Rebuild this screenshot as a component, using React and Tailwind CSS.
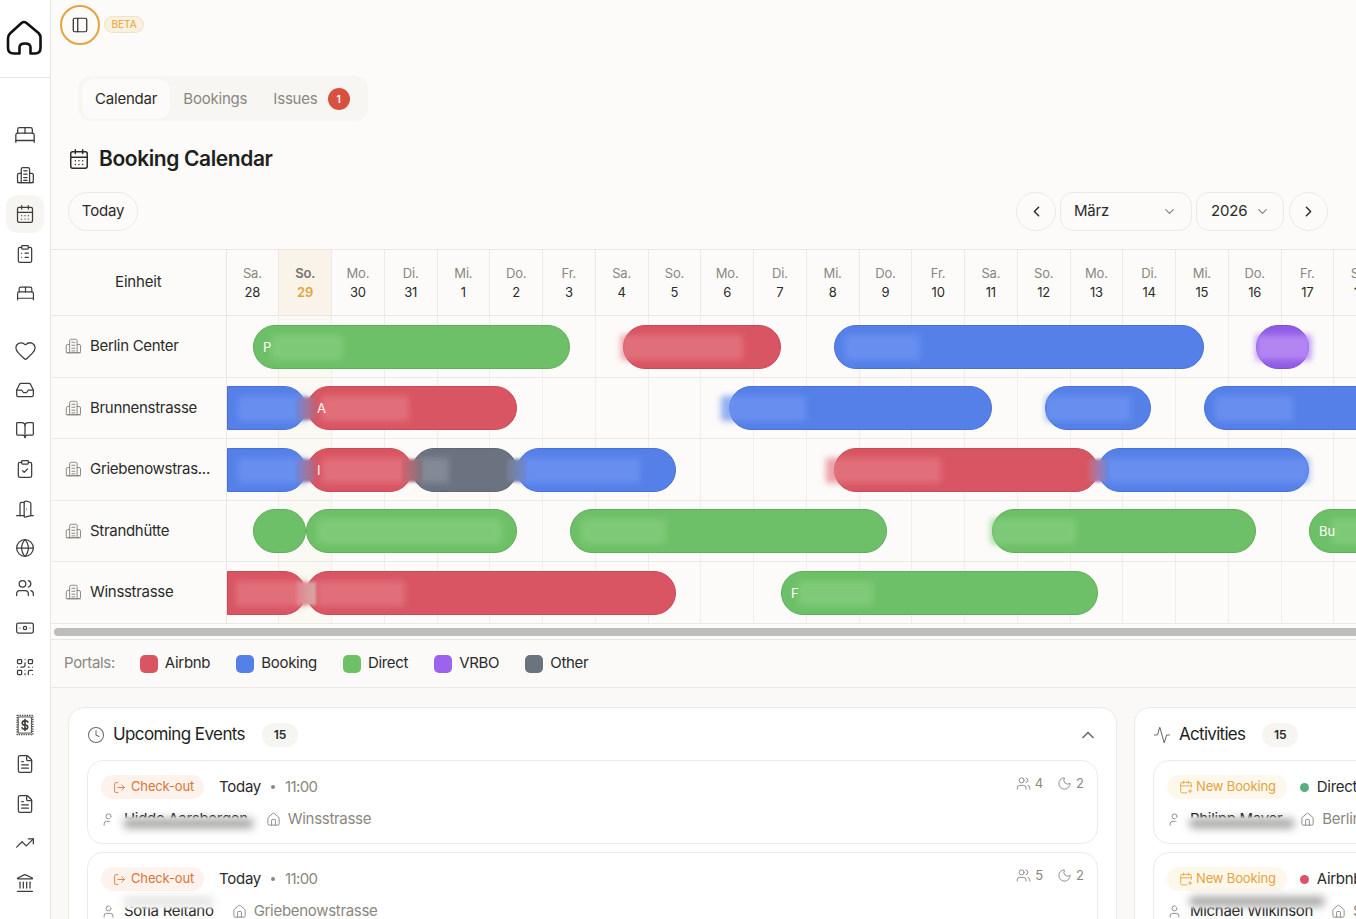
import React from "react";
import {
  BedDouble, CalendarDays, ClipboardList, Heart, Inbox, BookOpen, ClipboardCheck, DoorOpen, Globe, Users, Banknote, QrCode,
  FileText, TrendingUp, Landmark, PanelLeft, ChevronLeft, ChevronRight, ChevronDown, ChevronUp, Clock, Activity, LogOut, User, House, Moon, CalendarPlus,
} from "lucide-react";

const B = { c: "bg-[#5580e8] border-[#4a72d6]", tint: "bg-[#6f94f2]/75" };
const R = { c: "bg-[#d95563] border-[#c94a58]", tint: "bg-[#e47a85]/70" };
const G = { c: "bg-[#6dc067] border-[#5fae5a]", tint: "bg-[#84cc7e]/75" };
const P = { c: "bg-[#8f5ce6] border-[#7f4fd6]", tint: "bg-[#b488f2]/95" };
const O = { c: "bg-[#6b7280] border-[#5f6673]", tint: "bg-[#8b919c]/75" };

const BR = "bg-linear-to-r from-[#6a84dc] to-[#c0606e]";
const RO = "bg-linear-to-r from-[#d0606e] to-[#7c7480]";
const OB = "bg-linear-to-r from-[#767c8a] to-[#6a88dc]";
const RB = "bg-linear-to-r from-[#d0606e] to-[#6a84dc]";
const RR = "bg-linear-to-r from-[#e0808a] to-[#d8a8a8]";

const days = [
  ["Sa.", "28"], ["So.", "29"], ["Mo.", "30"], ["Di.", "31"], ["Mi.", "1"], ["Do.", "2"], ["Fr.", "3"], ["Sa.", "4"], ["So.", "5"], ["Mo.", "6"], ["Di.", "7"],
  ["Mi.", "8"], ["Do.", "9"], ["Fr.", "10"], ["Sa.", "11"], ["So.", "12"], ["Mo.", "13"], ["Di.", "14"], ["Mi.", "15"], ["Do.", "16"], ["Fr.", "17"], ["Sa.", "18"],
];

const rows = [
  { name: "Berlin Center", bars: [
    { l: 26, w: 317, k: G, t: "P", blur: [17, 72] },
    { l: 396, w: 158, k: R, blur: [-3, 122] },
    { l: 607, w: 370, k: B, blur: [10, 75] },
    { l: 1029, w: 53, k: P, blur: [-1, 55] },
  ]},
  { name: "Brunnenstrasse", bars: [
    { l: 0, w: 79, k: B, flat: true, blur: [10, 68], edge: BR },
    { l: 80, w: 210, k: R, t: "A", blur: [13, 88] },
    { l: 502, w: 263, k: B, blur: [-9, 85] },
    { l: 818, w: 106, k: B, blur: [0, 85] },
    { l: 977, w: 200, k: B, blur: [10, 78] },
  ]},
  { name: "Griebenowstras...", bars: [
    { l: 0, w: 79, k: B, flat: true, blur: [10, 68], edge: BR },
    { l: 80, w: 105, k: R, t: "I", blur: [14, 85], edge: RO },
    { l: 185, w: 105, k: O, blur: [6, 30], edge: OB },
    { l: 290, w: 159, k: B, blur: [4, 118] },
    { l: 607, w: 264, k: R, blur: [-9, 115], edge: RB },
    { l: 871, w: 211, k: B, blur: [8, 202] },
  ]},
  { name: "Strandhütte", bars: [
    { l: 26, w: 53, k: G },
    { l: 79, w: 211, k: G, blur: [10, 185] },
    { l: 343, w: 317, k: G, blur: [10, 85] },
    { l: 765, w: 264, k: G, blur: [-2, 85] },
    { l: 1082, w: 100, k: G, t: "Bu", blur: [21, 70] },
  ]},
  { name: "Winsstrasse", bars: [
    { l: 0, w: 79, k: R, flat: true, blur: [8, 70], edge: RR },
    { l: 79, w: 370, k: R, blur: [10, 88] },
    { l: 554, w: 317, k: G, t: "F", blur: [16, 75] },
  ]},
];

function SideIcon({ I, active, size = 20, sw = 1.5 }) {
  return (
    <div className={`w-[38px] h-[38px] mb-[1.55px] rounded-xl flex items-center justify-center ${active ? "bg-[#f6f5f2]" : ""}`}>
      <I size={size} strokeWidth={sw} className="text-[#3d3d3a]" />
    </div>
  );
}

function Hotel({ size = 18, className = "", strokeWidth = 1.5 }) {
  return (
    <svg width={size} height={size} viewBox="0 0 24 24" fill="none" stroke="currentColor" strokeWidth={strokeWidth} strokeLinecap="round" strokeLinejoin="round" className={className}>
      <path d="M7.500 21V5a2 2 0 0 1 2-2h6a2 2 0 0 1 2 2v16" />
      <path d="M7.500 10H5a2 2 0 0 0-2 2v7a2 2 0 0 0 2 2h15a2 2 0 0 0 2-2v-7a2 2 0 0 0-2-2h-2.500" />
      <path d="M10.500 7h4M10.500 11h4M10.500 15h4M10.500 18.500h4M3 21h19" />
    </svg>
  );
}

function Stamp({ size = 18, className = "", strokeWidth = 1.5 }) {
  return (
    <svg width={size} height={size} viewBox="0 0 24 24" fill="none" stroke="currentColor" strokeWidth={strokeWidth} strokeLinecap="round" strokeLinejoin="round" className={className}>
      <path strokeDasharray="1.4 1.2" strokeLinecap="butt" d="M3.500 1.500h17v21h-17z" />
      <path d="M5 3.200h14v17.600H5z" strokeWidth="1" />
      <path d="M12 6v12M15.200 8.800A2.600 2.600 0 0 0 12.700 7.500h-1.400a2.250 2.250 0 0 0 0 4.500h1.400a2.250 2.250 0 0 1 0 4.500h-1.400A2.600 2.600 0 0 1 8.800 15" strokeWidth="1.800" />
    </svg>
  );
}

function Logo() {
  return (
    <svg width="38" height="38" viewBox="6 19.500 38 38" fill="none" stroke="#111" strokeWidth="2.6" strokeLinecap="round" strokeLinejoin="round">
      <path d="M8 38 V47.500 Q8 53 14 53 H19.500 V47 Q19.500 43 25 43 Q30.500 43 30.500 47 V53 H35 Q40.500 53 40.500 47.500 V37 Q40.500 34.500 38.500 32.500 L26.500 22.500 Q24 20.500 21.500 22.500 L10 33 Q8 35 8 38" />
    </svg>
  );
}

function Sidebar() {
  return (
    <aside className="w-[51px] shrink-0 h-full bg-white border-r border-[#e8e6e2] flex flex-col items-center">
      <div className="w-full h-[78px] shrink-0 border-b border-[#e8e6e2] flex items-center justify-center">
        <Logo />
      </div>
      <div className="h-[38px] shrink-0" />
      <SideIcon I={BedDouble} size={22} sw={1.4} />
      <SideIcon I={Hotel} />
      <SideIcon I={CalendarDays} active />
      <SideIcon I={ClipboardList} />
      <SideIcon I={BedDouble} size={19} />
      <div className="h-[18px] shrink-0" />
      <SideIcon I={Heart} size={23} sw={1.3} />
      <SideIcon I={Inbox} />
      <SideIcon I={BookOpen} />
      <SideIcon I={ClipboardCheck} />
      <SideIcon I={DoorOpen} />
      <SideIcon I={Globe} />
      <SideIcon I={Users} />
      <SideIcon I={Banknote} />
      <SideIcon I={QrCode} />
      <div className="h-[18px] shrink-0" />
      <SideIcon I={Stamp} size={22} />
      <SideIcon I={FileText} />
      <SideIcon I={FileText} />
      <SideIcon I={TrendingUp} />
      <SideIcon I={Landmark} />
    </aside>
  );
}

function Bar({ b }) {
  return (
    <div
      className={`absolute top-[8.9px] h-[44px] border ${b.k.c} ${b.flat ? "rounded-r-[22px]" : "rounded-[22px]"} text-[13px] leading-[42px] pl-[9px] whitespace-nowrap`}
      style={{ left: b.l + 0.5, width: b.w }}
    >
      {b.t && <span className="relative z-[1] text-white">{b.t}</span>}
      {b.blur && (
        <div
          className={`absolute top-[9px] h-[25px] blur-[3px] ${b.k.tint}`}
          style={{ left: b.blur[0], width: b.blur[1] }}
        />
      )}
      {b.edge && (
        <div className={`absolute z-10 right-[-11px] top-[10px] w-[20px] h-[23px] blur-[1.5px] ${b.edge}`} />
      )}
    </div>
  );
}

function HeaderRow() {
  return (
    <div className="flex h-[67px] border-y border-[#e8e6e2] w-max">
      <div className="w-[175.5px] shrink-0 border-r border-[#e8e6e2] flex items-center justify-center text-[15px] tracking-[-0.2px] text-[#2b2b29]">Einheit</div>
      {days.map(([d, n], i) => (
        <div key={i} className={`w-[52.75px] shrink-0 border-r border-[#eceae6] flex flex-col items-center justify-center gap-[1px] text-[13px] leading-[18px] tracking-[-0.2px] ${i === 1 ? "bg-[#faf3ea] font-semibold" : ""}`}>
          <span className={i === 1 ? "text-[#77736c]" : "text-[#8a8780]"}>{d}</span>
          <span className={i === 1 ? "text-[#e5a33d]" : "text-[#2b2b29]"}>{n}</span>
        </div>
      ))}
    </div>
  );
}

function UnitRow({ r }) {
  return (
    <div className="flex h-[61.5px] border-b border-[#eceae6] w-max">
      <div className="w-[175.5px] shrink-0 border-r border-[#e8e6e2] flex items-center pl-[13px] gap-[8px] text-[15px] tracking-[-0.3px] text-[#2b2b29]">
        <Hotel size={18} strokeWidth={1.3} className="text-[#8a8780]" />
        <span className="whitespace-nowrap">{r.name}</span>
      </div>
      <div className="relative flex">
        {days.map((_, i) => (
          <div key={i} className={`w-[52.75px] shrink-0 border-r border-[#f0eeea] ${i === 1 ? "bg-[#fbf9f3]" : ""}`} />
        ))}
        {r.bars.map((b, i) => <Bar key={i} b={b} />)}
      </div>
    </div>
  );
}

function Legend({ c, t }) {
  return (
    <div className="flex items-center gap-[7px] text-[15px] tracking-[-0.3px] text-[#2b2b29]">
      <span className={`w-[18px] h-[18px] rounded-[5px] ${c}`} />
      {t}
    </div>
  );
}

function Smudge({ w, up, dark }) {
  const pos = up ? "top-[-6px] h-[14px]" : "top-[9px] h-[18px]";
  const smudge = dark ? "bg-[#4a4a48]/55" : "bg-[#8a8a88]/25";
  return (
    <div className={`absolute left-[-14px] bg-white blur-[1px] ${pos}`} style={{ width: w }}>
      <div className={`absolute left-[14px] right-[2px] h-[9px] blur-[4px] ${up ? "top-[3px]" : "top-[2px]"} ${smudge}`} />
    </div>
  );
}

function EventCard({ tag, time, meta, name, nameW, unit, up, dark = true }) {
  return (
    <div className="bg-white border border-[#edebe7] rounded-[16px] h-[84px] px-[13px] pt-[14px] mb-[8px] relative shrink-0">
      <div className="flex items-center h-[24px]">
        {tag}
        {time}
      </div>
      {meta && (
        <div className="absolute right-[13px] top-[13px] flex items-center text-[13px] text-[#8a8780]">
          <Users size={15} strokeWidth={1.5} /><span className="ml-[4px] mr-[14px]">{meta[0]}</span>
          <Moon size={15} strokeWidth={1.5} /><span className="ml-[4px]">{meta[1]}</span>
        </div>
      )}
      <div className="flex items-center mt-[8px] h-[24px] text-[15px] tracking-[-0.3px]">
        <User size={15} strokeWidth={1.5} className="text-[#8a8780] shrink-0" />
        <div className="relative ml-[8px] mr-[18px] whitespace-nowrap text-[#2b2b29]">
          {name}
          <Smudge w={nameW} up={up} dark={dark} />
        </div>
        <House size={15} strokeWidth={1.5} className="text-[#8a8780] shrink-0" />
        <span className="ml-[7px] text-[#8a8780] whitespace-nowrap">{unit}</span>
      </div>
    </div>
  );
}

const CheckOut = (
  <span className="flex items-center gap-[5px] h-[24px] pl-[12px] pr-[10px] rounded-full bg-[#fdf3ec] text-[#d9743a] text-[13px] tracking-[-0.15px] mr-[15px]">
    <LogOut size={13} strokeWidth={1.6} />Check-out
  </span>
);
const NewBooking = (
  <span className="flex items-center gap-[3px] h-[24px] pl-[12px] pr-[11px] rounded-full bg-[#fdf7ec] text-[#e5a33d] text-[13px] tracking-[-0.15px] mr-[13px]">
    <CalendarPlus size={14} strokeWidth={1.5} />New Booking
  </span>
);
const Timing = (
  <span className="flex items-center text-[15px] tracking-[-0.3px] text-[#2b2b29]">
    Today<span className="w-[4px] h-[4px] rounded-full bg-[#8a8780] mx-[10px]" /><span className="text-[#8a8780] tracking-[-0.6px]">11:00</span>
  </span>
);
const portal = (c, t) => (
  <span className="flex items-center text-[15px] tracking-[-0.3px] text-[#2b2b29] whitespace-nowrap">
    <span className={`w-[9px] h-[9px] rounded-full mr-[8px] ${c}`} />{t}
  </span>
);

export default function App() {
  return (
    <div className="h-[919px] w-[1356px] overflow-hidden flex bg-[#fcfbf9] text-[#2b2b29]" style={{ fontFamily: "Inter, 'Liberation Sans', sans-serif" }}>
      <Sidebar />
      <main className="flex-1 min-w-0 overflow-hidden">
        <div className="h-[50px] pl-[9px] pt-[5px] flex items-start gap-[4px]">
          <button className="w-[40px] h-[40px] rounded-full border-2 border-[#e5a33d] flex items-center justify-center text-[#2b2b29]">
            <PanelLeft size={18} strokeWidth={1.6} />
          </button>
          <span className="mt-[11px] h-[17px] w-[40px] text-center rounded-full bg-[#faf0de] border border-[#f1e2c8] text-[#e5a33d] text-[10px] leading-[15px]">BETA</span>
        </div>
        <div className="pl-[27px] pt-[26px]">
          <div className="flex items-center h-[45px] rounded-[13px] bg-[#f7f6f3] w-[290px] pl-[4px] pt-[1px] text-[15px] tracking-[-0.2px]">
            <span className="h-[40px] px-[13px] rounded-[10px] bg-[#fcfbf9] shadow-[0_0_2px_rgba(0,0,0,0.04)] flex items-center text-[#2b2b29]">Calendar</span>
            <span className="px-[13px] text-[#8a8780]">Bookings</span>
            <span className="pl-[13px] text-[#8a8780]">Issues</span>
            <span className="ml-[10px] w-[22px] h-[22px] rounded-full bg-[#d9503f] text-white text-[10px] font-semibold flex items-center justify-center">1</span>
          </div>
        </div>
        <div className="flex items-center pl-[17px] mt-[22px] h-[32px] gap-[9px]">
          <CalendarDays size={22} strokeWidth={1.6} className="text-[#2b2b29]" />
          <h1 className="text-[21px] font-semibold tracking-[-0.4px] text-[#1f1f1d]">Booking Calendar</h1>
        </div>
        <div className="flex items-center justify-between pl-[17px] pr-[28px] mt-[16px] h-[40px]">
          <button className="h-[39px] w-[70px] rounded-full border border-[#eceae6] text-[15px] tracking-[-0.2px]">Today</button>
          <div className="flex items-center gap-[4px]">
            <button className="w-[40px] h-[39px] rounded-full border border-[#eceae6] flex items-center justify-center"><ChevronLeft size={17} /></button>
            <div className="w-[132px] h-[39px] rounded-[13px] border border-[#eceae6] flex items-center justify-between pl-[13px] pr-[14px] text-[15px] tracking-[-0.2px]">März<ChevronDown size={15} className="text-[#8a8780]" /></div>
            <div className="w-[88px] h-[39px] rounded-[13px] border border-[#eceae6] flex items-center justify-between pl-[14px] pr-[13px] text-[15px] tracking-[-0.2px]">2026<ChevronDown size={15} className="text-[#8a8780]" /></div>
            <button className="w-[39px] h-[39px] rounded-full border border-[#eceae6] flex items-center justify-center ml-[1px]"><ChevronRight size={17} /></button>
          </div>
        </div>
        <div className="mt-[18px] overflow-hidden h-[375px]">
          <HeaderRow />
          {rows.map((r) => <UnitRow key={r.name} r={r} />)}
        </div>
        <div className="h-[16px] border-b border-[#e8e6e2] pt-[4px] pl-[3px] bg-[#fcfbf9]">
          <div className="h-[8px] rounded-l-full bg-[#bdbdbb]" />
        </div>
        <div className="h-[48px] flex items-center pl-[13px] border-b border-[#eceae6] bg-[#fbfaf8] text-[15px]">
          <span className="text-[#8a8780] tracking-[-0.35px] mr-[25px]">Portals:</span>
          <div className="flex items-center gap-[26px]">
            <Legend c="bg-[#d95563]" t="Airbnb" />
            <Legend c="bg-[#5580e8]" t="Booking" />
            <Legend c="bg-[#6dc067]" t="Direct" />
            <Legend c="bg-[#9b63ee]" t="VRBO" />
            <Legend c="bg-[#6b7280]" t="Other" />
          </div>
        </div>
        <div className="flex bg-[#faf9f7] pl-[17px] pt-[19px] gap-[17px] h-[240px]">
          <section className="w-[1049px] shrink-0 h-[300px] bg-white border border-[#edebe7] rounded-[16px] px-[18px] pt-[11px]">
            <div className="flex items-center h-[32px] mb-[9px]">
              <Clock size={18} strokeWidth={1.4} className="text-[#6f6c66]" />
              <span className="ml-[8px] text-[17px] tracking-[-0.6px] text-[#1f1f1d]">Upcoming Events</span>
              <span className="ml-[17px] w-[36px] h-[24px] rounded-full bg-[#f6f5f2] text-[12px] font-semibold flex items-center justify-center">15</span>
              <ChevronUp size={20} className="ml-auto text-[#6f6c66]" />
            </div>
            <EventCard tag={CheckOut} time={Timing} meta={["4", "2"]} name="Hidde Aarsbergen" nameW={145} unit="Winsstrasse" />
            <EventCard tag={CheckOut} time={Timing} meta={["5", "2"]} name="Sofia Reitano" nameW={105} up dark={false} unit="Griebenowstrasse" />
          </section>
          <section className="w-[420px] shrink-0 h-[300px] bg-white border border-[#edebe7] rounded-[16px] px-[18px] pt-[11px]">
            <div className="flex items-center h-[32px] mb-[9px]">
              <Activity size={18} strokeWidth={1.4} className="text-[#6f6c66]" />
              <span className="ml-[8px] text-[17px] tracking-[-0.7px] text-[#1f1f1d]">Activities</span>
              <span className="ml-[17px] w-[36px] h-[24px] rounded-full bg-[#f6f5f2] text-[12px] font-semibold flex items-center justify-center">15</span>
            </div>
            <EventCard tag={NewBooking} time={portal("bg-[#5aae7e]", "Direct")} name="Philipp Mayer" nameW={120} unit="Berlin Center" />
            <EventCard tag={NewBooking} time={portal("bg-[#d95563]", "Airbnb")} name="Michael Wilkinson" nameW={150} up unit="Strandhütte" />
          </section>
        </div>
      </main>
    </div>
  );
}
